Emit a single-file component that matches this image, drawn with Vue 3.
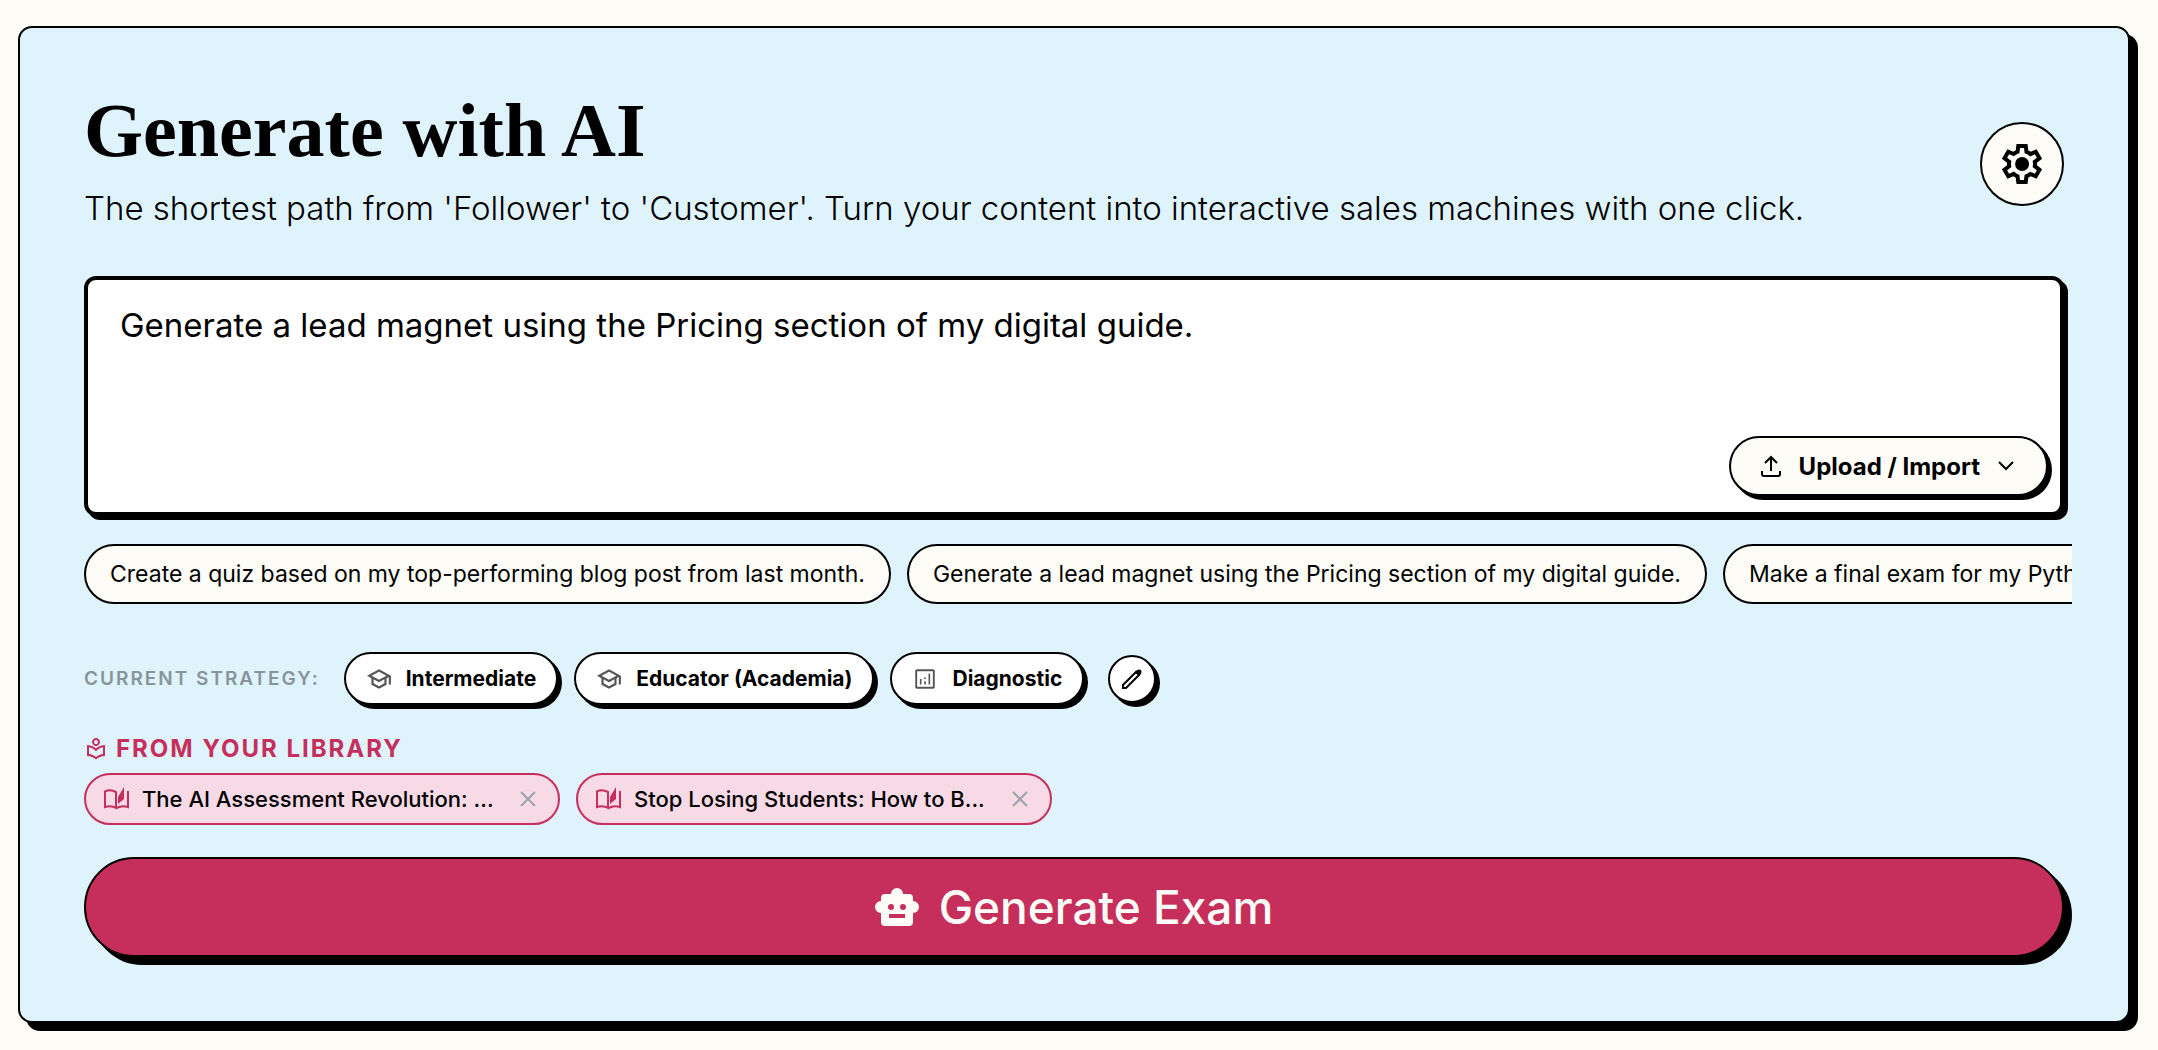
<script setup>
import { ref } from 'vue'

const prompt = ref('Generate a lead magnet using the Pricing section of my digital guide.')

const suggestions = [
  'Create a quiz based on my top-performing blog post from last month.',
  'Generate a lead magnet using the Pricing section of my digital guide.',
  'Make a final exam for my Python course for beginners.'
]

const school = 'M480-120 200-272v-240L40-600l440-240 440 240v320h-80v-276l-80 44v240L480-120Zm0-332 274-148-274-148-274 148 274 148Zm0 241 200-108v-151L480-360 280-470v151l200 108Z'
const chart = 'M290-280h60v-200h-60v200Zm320 0h60v-400h-60v400Zm-160 0h60v-120h-60v120Zm0-200h60v-60h-60v60ZM180-120q-25 0-42-18T120-180v-600q0-25 18-42T180-840h600q25 0 42 18T840-780v600q0 25-18 42T780-120H180Zm10-70h580v-580H190v580Z'

const strategies = [
  { label: 'Intermediate', icon: school },
  { label: 'Educator (Academia)', icon: school },
  { label: 'Diagnostic', icon: chart }
]

const library = ref([
  'The AI Assessment Revolution: ...',
  'Stop Losing Students: How to B...'
])

function removeItem(index) {
  library.value.splice(index, 1)
}
</script>

<template>
  <main class="card">
    <header class="header">
      <div>
        <h1>Generate with AI</h1>
        <p>The shortest path from 'Follower' to 'Customer'. Turn your content into interactive sales machines with one click.</p>
      </div>
      <button class="settings" type="button" aria-label="Settings">
        <svg width="48" height="48" viewBox="0 -960 960 960" fill="currentColor">
          <path d="m370-80-16-128q-13-5-24.500-12T307-235l-119 50L78-375l103-78q-1-7-1-13.500v-27q0-6.500 1-13.500L78-585l110-190 119 50q11-8 23-15t24-12l16-128h220l16 128q13 5 24.500 12t22.500 15l119-50 110 190-103 78q1 7 1 13.500v27q0 6.500-2 13.500l103 78-110 190-118-50q-11 8-23 15t-24 12L590-80H370Zm70-80h79l14-106q31-8 57.500-23.500T639-327l99 41 39-68-86-65q5-14 7-29.500t2-31.500q0-16-2-31.500t-7-29.500l86-65-39-68-99 42q-22-23-48.500-38.500T533-694l-13-106h-79l-14 106q-31 8-57.500 23.500T321-633l-99-41-39 68 86 64q-5 15-7 30t-2 32q0 16 2 31t7 30l-86 65 39 68 99-42q22 23 48.500 38.500T427-266l13 106Zm42-180q58 0 99-41t41-99q0-58-41-99t-99-41q-59 0-99.500 41T342-480q0 58 40.500 99t99.500 41Z" />
        </svg>
      </button>
    </header>

    <div class="composer">
      <textarea v-model="prompt" aria-label="Prompt" spellcheck="false"></textarea>
      <button class="upload" type="button">
        <svg width="20" height="22" viewBox="0 0 20 22" fill="none" stroke="currentColor" stroke-width="2">
          <path d="M10 16V2M4 8l6-6 6 6M1 16v3q0 2 2 2h14q2 0 2-2v-3" />
        </svg>
        <span>Upload / Import</span>
        <svg width="16" height="10" viewBox="0 0 16 10" fill="none" stroke="currentColor" stroke-width="2">
          <path d="m1 1 7 7 7-7" />
        </svg>
      </button>
    </div>

    <div class="suggestions">
      <button v-for="text in suggestions" :key="text" type="button">{{ text }}</button>
    </div>

    <section class="strategy">
      <span class="strategy-label">CURRENT STRATEGY:</span>
      <div class="pills">
        <button v-for="item in strategies" :key="item.label" type="button">
          <svg width="26" height="26" viewBox="0 -960 960 960" fill="#555"><path :d="item.icon" /></svg>
          <span>{{ item.label }}</span>
        </button>
      </div>
      <button class="edit" type="button" aria-label="Edit strategy">
        <svg width="20" height="20" viewBox="0 0 20 20" fill="none" stroke="currentColor" stroke-width="2">
          <path d="M1 19v-3L14 3l3 3L4 19Z" />
          <path d="M13 3l2-2q2-1 4 0 1 2 0 4l-2 2Z" fill="currentColor" stroke="none" />
        </svg>
      </button>
    </section>

    <section class="library">
      <h2>
        <svg width="24" height="24" viewBox="0 -960 960 960" fill="currentColor">
          <path d="M480-60q-72-68-165-104t-195-36v-440q101 0 194 36.500T480-498q73-69 166-105.500T840-640v440q-103 0-195.500 36T480-60Zm0-104q63-47 134-75t146-37v-276q-73 13-143.500 52.500T480-394q-66-66-136.500-105.500T200-552v276q75 9 146 37t134 75Zm0-436q-66 0-113-47t-47-113q0-66 47-113t113-47q66 0 113 47t47 113q0 66-47 113t-113 47Zm0-80q33 0 56.500-23.500T560-760q0-33-23.500-56.500T480-840q-33 0-56.500 23.500T400-760q0 33 23.500 56.500T480-680Z" />
        </svg>
        FROM YOUR LIBRARY
      </h2>
      <ul>
        <li v-for="(title, index) in library" :key="title">
          <svg width="28" height="28" viewBox="0 0 28 28" fill="none" stroke="currentColor" stroke-width="2">
            <path d="M14 23V7Q8 4 3 6.500V22q6-2 11.500 1Q20 20 26 22V6" />
            <path d="M16 12 22 2v12l-6 5Z" fill="currentColor" stroke="none" />
          </svg>
          <span>{{ title }}</span>
          <button type="button" aria-label="Remove" @click="removeItem(index)">
            <svg width="16" height="16" viewBox="0 0 16 16" fill="none" stroke="currentColor" stroke-width="2"><path d="m1 1 14 14M15 1 1 15" /></svg>
          </button>
        </li>
      </ul>
    </section>

    <button class="generate" type="button">
      <svg width="44" height="40" viewBox="0 0 44 40" fill="currentColor">
        <path fill-rule="evenodd" d="M16 7a6 6 0 0 1 12 0h6q4 0 4 4v3a6 6 0 0 1 0 12v9q0 4-4 4H10q-4 0-4-4v-9a6 6 0 0 1 0-12v-3q0-4 4-4ZM13 20a3 3 0 1 0 6 0a3 3 0 1 0-6 0M25 20a3 3 0 1 0 6 0a3 3 0 1 0-6 0M14 27h16v4H14Z" />
      </svg>
      <span>Generate Exam</span>
    </button>
  </main>
</template>

<style>
body {
  margin: 0;
  background: #fdfcf7;
}
</style>

<style scoped>
* {
  box-sizing: border-box;
}

.card {
  margin: 26px 28px 26px 18px;
  padding: 64px;
  border: 2px solid #000;
  border-radius: 14px;
  background: #dff3fc;
  box-shadow: 8px 8px 0 #000;
  font-family: Inter, "Liberation Sans", sans-serif;
  color: #000;
}

button {
  display: flex;
  align-items: center;
  flex-shrink: 0;
  margin: 0;
  border: 2px solid #000;
  border-radius: 50px;
  font-family: inherit;
  color: inherit;
  white-space: nowrap;
  cursor: pointer;
}

svg {
  display: block;
  flex-shrink: 0;
}

.header {
  display: flex;
  align-items: center;
  justify-content: space-between;
  gap: 32px;
  margin-bottom: 40px;
}

h1 {
  margin: 0 0 12px;
  font-family: "Liberation Serif", serif;
  font-size: 76px;
  line-height: 76px;
  font-weight: 700;
}

.header p {
  margin: 0;
  font-size: 33px;
  line-height: 56px;
  font-weight: 300;
}

.settings {
  width: 84px;
  height: 84px;
  justify-content: center;
  padding: 0;
  background: #fdfcf7;
}

.composer {
  position: relative;
}

textarea {
  display: block;
  width: 100%;
  height: 240px;
  padding: 20px 32px;
  border: 4px solid #000;
  border-radius: 12px;
  outline: none;
  resize: none;
  background: #fff;
  box-shadow: 4px 4px 0 #000;
  font-family: inherit;
  font-size: 33px;
  line-height: 50px;
  color: #000;
}

.upload {
  position: absolute;
  right: 16px;
  bottom: 20px;
  height: 60px;
  gap: 18px;
  padding: 0 32px 0 30px;
  background: #fdfcf7;
  box-shadow: 4px 4px 0 #000;
  font-size: 24px;
  font-weight: 700;
}

.suggestions {
  display: flex;
  gap: 16px;
  margin: 28px -8px 0 0;
  overflow: hidden;
}

.suggestions button {
  height: 60px;
  padding: 0 24px;
  background: #fdfcf7;
  font-size: 23px;
  font-weight: 400;
}

.strategy {
  display: flex;
  align-items: center;
  gap: 24px;
  margin-top: 48px;
}

.strategy-label {
  font-size: 19px;
  font-weight: 600;
  letter-spacing: 2px;
  color: #87959b;
}

.pills {
  display: flex;
  gap: 16px;
}

.pills button {
  height: 53px;
  gap: 14px;
  padding: 0 20px;
  background: #fff;
  box-shadow: 4px 4px 0 #000;
  font-size: 21px;
  font-weight: 700;
}

.edit {
  width: 48px;
  height: 48px;
  justify-content: center;
  padding: 0;
  background: #fff;
  box-shadow: 4px 4px 0 #000;
}

.library {
  margin-top: 28px;
  color: #c62f5b;
}

h2 {
  display: flex;
  align-items: center;
  gap: 8px;
  margin: 0 0 8px;
  font-size: 24px;
  line-height: 32px;
  font-weight: 700;
  letter-spacing: 2px;
}

ul {
  display: flex;
  gap: 16px;
  margin: 0;
  padding: 0;
  list-style: none;
}

li {
  display: flex;
  align-items: center;
  justify-content: space-between;
  gap: 12px;
  width: 476px;
  height: 52px;
  padding: 0 22px 0 16px;
  border: 2px solid #c62f5b;
  border-radius: 26px;
  background: #f8d9e6;
}

li span {
  flex: 1;
  font-size: 22px;
  font-weight: 500;
  white-space: nowrap;
  color: #000;
}

li button {
  padding: 0;
  border: 0;
  background: none;
  color: #9ca3af;
}

.generate {
  width: 100%;
  height: 100px;
  justify-content: center;
  gap: 20px;
  margin-top: 32px;
  background: #c62f5b;
  box-shadow: 8px 8px 0 #000;
  font-size: 46px;
  font-weight: 500;
  color: #fdfcf7;
}
</style>
